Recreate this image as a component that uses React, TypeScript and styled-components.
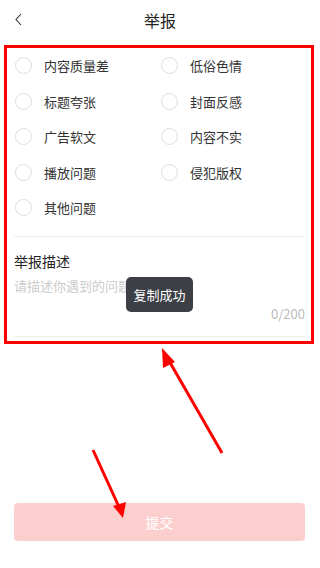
import React from 'react';
import styled, { createGlobalStyle } from 'styled-components';

const GlobalStyle = createGlobalStyle`
  html, body {
    margin: 0;
    padding: 0;
    background: #fff;
    font-family: "Noto Sans CJK SC", "Noto Sans", sans-serif;
  }
  * { box-sizing: border-box; }
`;

const Page = styled.div`
  position: relative;
  width: 320px;
  height: 568px;
  display: flex;
  flex-direction: column;
  overflow: hidden;
`;

const Header = styled.div`
  position: relative;
  height: 40px;
  display: flex;
  align-items: center;
  justify-content: center;
  font-size: 16px;
  color: #222;
`;

const Back = styled.div`
  position: absolute;
  left: 13px;
  top: 12px;
  width: 12px;
  height: 15px;
  display: flex;
`;

const Marked = styled.div`
  margin: 5px 6px 0 4px;
  border: 3px solid #f00;
  padding: 0 6px 4px 7px;
`;

const Options = styled.div`
  display: grid;
  grid-template-columns: 146px 1fr;
  padding-bottom: 10px;
  border-bottom: 1px solid #eee;
`;

const Option = styled.div`
  height: 35.5px;
  display: flex;
  align-items: center;
  gap: 12px;
  font-size: 13px;
  color: #333;
`;

const Radio = styled.span`
  width: 17px;
  height: 17px;
  border-radius: 50%;
  border: 1px solid #ddd;
  margin-left: 1px;
`;

const Label = styled.div`
  margin-top: 14px;
  font-size: 14px;
  line-height: 20px;
  color: #222;
`;

const Area = styled.div`
  position: relative;
  height: 66px;
  padding-top: 6px;
  font-size: 13px;
  line-height: 18px;
  color: #ccc;
  border-bottom: 1px solid #eee;
`;

const Counter = styled.span`
  position: absolute;
  right: 0;
  bottom: 13px;
  font-size: 13px;
  line-height: 18px;
  color: #bbb;
`;

const Footer = styled.div`
  margin-top: auto;
  padding: 0 15px 27px 14px;
`;

const Submit = styled.button`
  width: 100%;
  height: 38px;
  border: none;
  border-radius: 4px;
  background: #fccfcf;
  color: #fff;
  font-family: inherit;
  font-size: 14px;
`;

const Toast = styled.div`
  position: absolute;
  left: 126px;
  top: 277px;
  width: 67px;
  height: 35px;
  border-radius: 5px;
  background: #3d3f47;
  color: #fff;
  font-size: 13px;
  display: flex;
  align-items: center;
  justify-content: center;
`;

const Arrows = styled.svg`
  position: absolute;
  left: 0;
  top: 0;
  pointer-events: none;
`;

const options = ['内容质量差', '低俗色情', '标题夸张', '封面反感', '广告软文', '内容不实', '播放问题', '侵犯版权', '其他问题'];

const App: React.FC = () => {
  return (
    <Page>
      <GlobalStyle />
      <Header>
        <Back>
          <svg width="12" height="15" viewBox="0 0 12 15">
            <path d="M8 2 L3 7.5 L8 13" fill="none" stroke="#333" strokeWidth="1.1" />
          </svg>
        </Back>
        举报
      </Header>
      <Marked>
        <Options>
          {options.map((o) => (
            <Option key={o}>
              <Radio />
              {o}
            </Option>
          ))}
        </Options>
        <Label>举报描述</Label>
        <Area>
          请描述你遇到的问题
          <Counter>0/200</Counter>
        </Area>
      </Marked>
      <Footer>
        <Submit>提交</Submit>
      </Footer>
      <Toast>复制成功</Toast>
      <Arrows width="320" height="568" viewBox="0 0 320 568">
        <line x1="222" y1="453" x2="168" y2="359" stroke="#f00" strokeWidth="3" />
        <polygon points="162,348 175,362 163,368" fill="#f00" />
        <line x1="93" y1="450" x2="119" y2="507" stroke="#f00" strokeWidth="3" />
        <polygon points="123,518 113,506 126,502" fill="#f00" />
      </Arrows>
    </Page>
  );
};

export default App;
